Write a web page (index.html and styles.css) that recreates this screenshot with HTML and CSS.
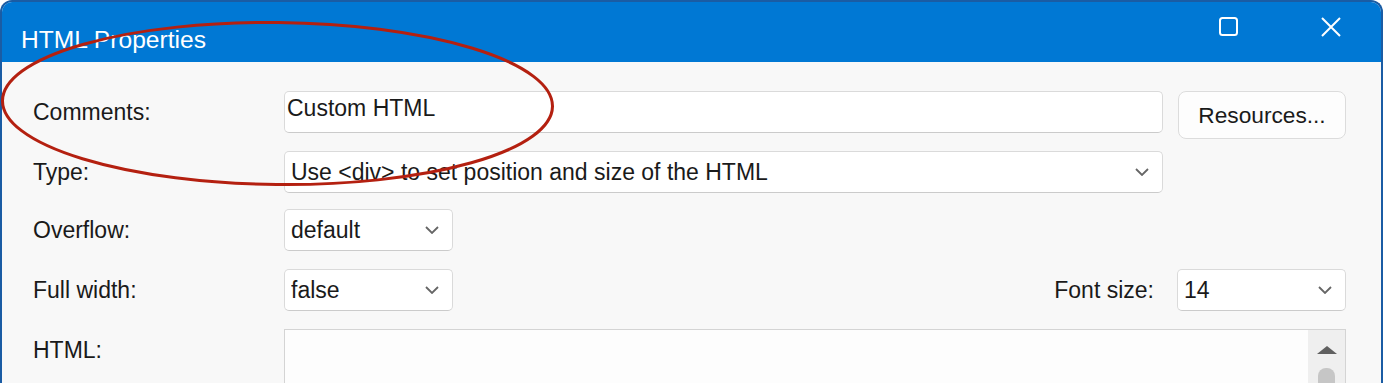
FILE: index.html
```html
<!DOCTYPE html>
<html lang="en">
<head>
    <meta charset="UTF-8">
    <title>HTML Properties</title>
    <link rel="stylesheet" href="styles.css">
</head>
<body>
<div class="window">
    <!-- title bar -->
    <div class="titlebar">
        <div class="title">HTML Properties</div>
        <div class="window-buttons">
            <svg class="win-icon" viewBox="0 0 20 20"><rect x="1" y="1" width="17" height="17" rx="2.5"/></svg>
            <svg class="win-icon" viewBox="0 0 20 20"><path d="M1 1 L19 19 M19 1 L1 19"/></svg>
        </div>
    </div>

    <form class="props" id="propsForm">
        <div class="row row-comments">
            <label for="comments">Comments:</label>
            <input type="text" class="field" id="comments" name="comments" value="Custom HTML">
            <button type="button" class="btn">Resources...</button>
        </div>

        <div class="row row-type">
            <label for="type">Type:</label>
            <div class="select-wrap">
                <select class="field" id="type" name="type">
                    <option>Use &lt;div&gt; to set position and size of the HTML</option>
                </select>
                <svg class="chevron" viewBox="0 0 14 8"><path d="M1 1 L7 7 L13 1"/></svg>
            </div>
        </div>

        <div class="row row-overflow">
            <label for="overflow">Overflow:</label>
            <div class="select-wrap small">
                <select class="field" id="overflow" name="overflow">
                    <option>default</option>
                </select>
                <svg class="chevron" viewBox="0 0 14 8"><path d="M1 1 L7 7 L13 1"/></svg>
            </div>
        </div>

        <div class="row row-fullwidth">
            <label for="fullWidth">Full width:</label>
            <div class="split">
                <div class="select-wrap small">
                    <select class="field" id="fullWidth" name="fullWidth">
                        <option>false</option>
                    </select>
                    <svg class="chevron" viewBox="0 0 14 8"><path d="M1 1 L7 7 L13 1"/></svg>
                </div>
                <label for="fontSize" class="label-right">Font size:</label>
            </div>
            <div class="select-wrap side">
                <select class="field" id="fontSize" name="fontSize">
                    <option>14</option>
                </select>
                <svg class="chevron" viewBox="0 0 14 8"><path d="M1 1 L7 7 L13 1"/></svg>
            </div>
        </div>

        <div class="row row-html">
            <label for="html">HTML:</label>
            <div class="html-box">
                <textarea id="html" name="html"></textarea>
                <div class="scrollbar">
                    <svg class="scroll-up" viewBox="0 0 20 8"><path d="M10 0 L20 8 L0 8 Z"/></svg>
                    <div class="thumb"></div>
                </div>
            </div>
        </div>
    </form>
</div>

<!-- red annotation circle -->
<svg class="annotation" viewBox="0 0 1384 388">
    <ellipse cx="277.5" cy="103.5" rx="275" ry="81" transform="rotate(0.6 277.5 103.5)"/>
</svg>
</body>
</html>
```

FILE: styles.css
```css
body {
    margin: 0;
    position: relative;
    background-color: #fff;
    font-family: "Liberation Sans", Arial, sans-serif;
}

/* window frame */
.window {
    box-sizing: border-box;
    width: 1383px;
    height: 383px;
    border: 2px solid #1a5ca4;
    border-bottom: none;
    border-radius: 12px 12px 0 0;
    background-color: #f8f8f8;
    overflow: hidden;
}

/* title bar */
.titlebar {
    display: flex;
    align-items: flex-start;
    height: 60px;
    background-color: #0078d4;
    color: white;
}

.title {
    margin: 24px 0 0 19px;
    font-size: 24.6px;
    line-height: 28px;
}

.window-buttons {
    display: flex;
    gap: 82px;
    margin: 15px 40px 0 auto;
}

.win-icon {
    width: 20px;
    height: 20px;
    fill: none;
    stroke: white;
    stroke-width: 2;
}

/* form */
.props {
    padding: 29px 0 0 31px;
}

.row {
    display: grid;
    grid-template-columns: 236px 879px 168px;
    column-gap: 15px;
    align-items: start;
}

.row-comments { height: 48px; }
.row-type { margin-top: 12px; }
.row-overflow { margin-top: 16px; }
.row-fullwidth { margin-top: 18px; }
.row-html { margin-top: 18px; }

label {
    font-size: 23px;
    line-height: 42px;
    color: #1a1a1a;
}

.field {
    box-sizing: border-box;
    width: 100%;
    height: 42px;
    margin: 0;
    border: 1px solid #dadada;
    border-bottom-color: #cbcbcb;
    border-radius: 5px;
    background-color: #fff;
    font-family: inherit;
    font-size: 23px;
    color: #1a1a1a;
    outline: none;
}

input.field {
    padding: 0 2px 8px 2px;
}

select.field {
    appearance: none;
    padding: 0 40px 0 6px;
}

.select-wrap {
    position: relative;
}

.select-wrap.small {
    width: 169px;
}

.select-wrap.side {
    margin-left: -1px;
}

.chevron {
    position: absolute;
    top: 17px;
    right: 14px;
    width: 14px;
    height: 8px;
    fill: none;
    stroke: #666;
    stroke-width: 1.8;
    pointer-events: none;
}

.split {
    display: flex;
    justify-content: space-between;
}

.label-right {
    padding-right: 9px;
}

.btn {
    box-sizing: border-box;
    height: 48px;
    margin: 0;
    padding: 0;
    border: 1px solid #dcdcdc;
    border-radius: 8px;
    background-color: #fdfdfd;
    font-family: inherit;
    font-size: 22.7px;
    color: #1a1a1a;
    cursor: pointer;
}

/* HTML editor box */
.html-box {
    grid-column: 2 / 4;
    display: flex;
    height: 120px;
    border: 1px solid #d4d4d4;
    background-color: #fdfdfd;
}

.html-box textarea {
    flex: 1;
    border: none;
    background-color: transparent;
    resize: none;
    outline: none;
}

.scrollbar {
    width: 37px;
    display: flex;
    flex-direction: column;
    align-items: center;
    background-color: #efefef;
}

.scroll-up {
    width: 20px;
    height: 8px;
    margin-top: 16px;
    fill: #606060;
}

.thumb {
    width: 17px;
    height: 60px;
    margin-top: 14px;
    border-radius: 8px 8px 0 0;
    background-color: #c6c6c6;
}

/* annotation over the dialog */
.annotation {
    position: absolute;
    top: 0;
    left: 0;
    width: 1384px;
    height: 388px;
    pointer-events: none;
}

.annotation ellipse {
    fill: none;
    stroke: #b42010;
    stroke-width: 3;
}
```
